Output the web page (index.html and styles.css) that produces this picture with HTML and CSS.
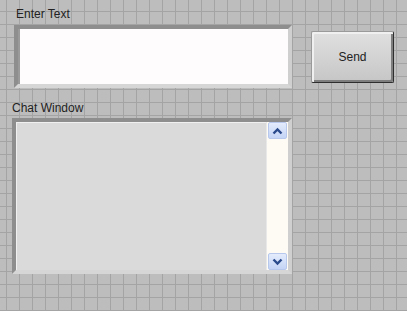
FILE: index.html
```html
<!DOCTYPE html>
<html lang="en">
<head>
  <meta charset="UTF-8">
  <title>Chat</title>
  <link rel="stylesheet" href="styles.css">
</head>
<body>

  <div class="panel">
    <div class="top-row">
      <div class="field">
        <label class="caption" for="msg">Enter Text</label>
        <div class="frame">
          <textarea id="msg" class="input"></textarea>
        </div>
      </div>
      <button class="send">Send</button>
    </div>

    <div class="field chat">
      <span class="caption">Chat Window</span>
      <div class="frame">
        <div class="chat-box">
          <div class="log"></div>
          <div class="scroll">
            <div class="arrow">
              <svg width="11" height="8" viewBox="0 0 11 8"><path d="M1.5 6.5 L5.5 2.5 L9.5 6.5" fill="none" stroke="#2a4a8c" stroke-width="2.4"/></svg>
            </div>
            <div class="track"></div>
            <div class="arrow">
              <svg width="11" height="8" viewBox="0 0 11 8"><path d="M1.5 1.5 L5.5 5.5 L9.5 1.5" fill="none" stroke="#2a4a8c" stroke-width="2.4"/></svg>
            </div>
          </div>
        </div>
      </div>
    </div>
  </div>

</body>
</html>
```

FILE: styles.css
```css
body {
  margin: 0;
  width: 407px;
  height: 311px;
  overflow: hidden;
  font-family: "Liberation Sans", Arial, sans-serif;
  font-size: 12px;
  color: #222;
  background-color: #bdbdbd;
  background-image:
    linear-gradient(to right, #a4a4a4 1px, transparent 1px),
    linear-gradient(to bottom, #a4a4a4 1px, transparent 1px);
  background-size: 13px 13px;
  background-position: 6px 11px;
}

.panel {
  padding: 7px 0 0 12px;
}

.top-row {
  display: flex;
  align-items: flex-start;
}

.field {
  display: flex;
  flex-direction: column;
}

.caption {
  line-height: 14px;
  margin: 0 0 4px 4px;
}

.top-row .frame {
  margin-left: 2px;
  width: 278px;
  height: 63px;
}

.frame {
  box-sizing: border-box;
  border: 4px solid;
  border-color: #8e8e8e #cfcfcf #d6d6d6 #8e8e8e;
  background: #9a9a9a;
  box-shadow: inset 1px 1px 0 #7a7a7a;
}

.input {
  display: block;
  box-sizing: border-box;
  width: 100%;
  height: 100%;
  margin: 0;
  border: none;
  border-left: 2px solid #9a9a9a;
  background: #fffcfd;
  resize: none;
  outline: none;
}

.send {
  margin: 24px 0 0 19px;
  width: 83px;
  height: 52px;
  box-sizing: border-box;
  border: 1px solid #2e2e2e;
  border-top-color: #9a9a9a;
  border-left-color: #9a9a9a;
  border-radius: 2px;
  background: linear-gradient(#e0e0e0, #c6c6c6);
  box-shadow: inset 2px 2px 0 #f0f0f0, inset -2px -2px 0 #7e7e7e;
  font-family: "Liberation Sans", Arial, sans-serif;
  font-size: 12px;
  color: #222;
  padding: 0;
}

.chat {
  margin-top: 13px;
}

.chat .caption {
  margin-left: 0;
  margin-bottom: 3px;
}

.chat .frame {
  width: 280px;
  height: 156px;
}

.chat-box {
  display: flex;
  height: 100%;
  background: #dadada;
}

.log {
  flex: 1;
  border-top: 1px solid #f0f0f0;
  border-left: 1px solid #f0f0f0;
}

.scroll {
  width: 19px;
  display: flex;
  flex-direction: column;
  padding: 0 1px;
  background: #fdfbf4;
  border-left: 1px solid #e8e8e8;
}

.arrow {
  height: 17px;
  box-sizing: border-box;
  border: 1px solid #b8c8ec;
  border-radius: 2px;
  background: linear-gradient(#e4ecfc, #c4d4f6);
  display: flex;
  align-items: center;
  justify-content: center;
}

.track {
  flex: 1;
}
```
